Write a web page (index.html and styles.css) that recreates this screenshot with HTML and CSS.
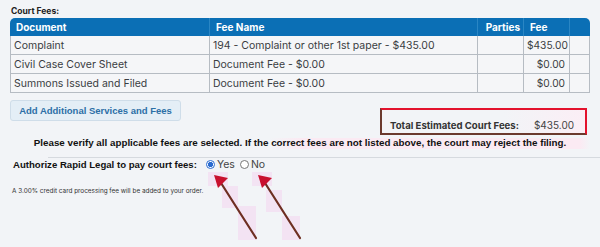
FILE: index.html
```html
<!DOCTYPE html>
<html>
<head>
<meta charset="utf-8">
<link rel="stylesheet" href="styles.css">
</head>
<body>
<div class="page">
  <div class="section-title">Court Fees:</div>
  <table class="fees">
    <colgroup>
      <col class="c-doc"><col class="c-name"><col class="c-parties"><col class="c-fee"><col class="c-extra">
    </colgroup>
    <thead>
      <tr><th>Document</th><th>Fee Name</th><th class="right">Parties</th><th>Fee</th><th></th></tr>
    </thead>
    <tbody>
      <tr><td>Complaint</td><td>194 - Complaint or other 1st paper - $435.00</td><td></td><td class="right">$435.00</td><td></td></tr>
      <tr><td>Civil Case Cover Sheet</td><td>Document Fee - $0.00</td><td></td><td class="right">$0.00</td><td></td></tr>
      <tr><td>Summons Issued and Filed</td><td>Document Fee - $0.00</td><td></td><td class="right">$0.00</td><td></td></tr>
    </tbody>
  </table>
  <div class="actions">
    <button class="add-btn">Add Additional Services and Fees</button>
    <div class="total-box">
      <span class="total-label">Total Estimated Court Fees:</span>
      <span class="total-value">$435.00</span>
    </div>
  </div>
  <div class="verify">Please verify all applicable fees are selected. If the correct fees are not listed above, the court may reject the filing.</div>
  <div class="authorize">
    <span class="auth-label">Authorize Rapid Legal to pay court fees:</span>
    <label class="radio"><span class="dot checked"></span>Yes</label>
    <label class="radio"><span class="dot"></span>No</label>
  </div>
  <div class="note">A 3.00% credit card processing fee will be added to your order.</div>
  <svg class="arrows" width="600" height="247" viewBox="0 0 600 247">
    <g fill="#ff3fd0" opacity="0.09">
      <rect x="208" y="172" width="20" height="14"/>
      <rect x="222" y="186" width="16" height="22"/>
      <rect x="238" y="206" width="18" height="34"/>
      <rect x="252" y="172" width="20" height="14"/>
      <rect x="266" y="190" width="16" height="22"/>
      <rect x="282" y="216" width="18" height="24"/>
    </g>
    <g stroke="#6e2f22" stroke-width="2.2" stroke-linecap="round">
      <line x1="256" y1="238" x2="221" y2="183"/>
      <line x1="300" y1="238" x2="265" y2="183"/>
    </g>
    <g fill="#c8102e">
      <polygon points="214,175 228,178 218,188"/>
      <polygon points="258,175 272,178 262,188"/>
    </g>
  </svg>
</div>
</body>
</html>
```

FILE: styles.css
```css
html, body {
  margin: 0;
  padding: 0;
}
body {
  background: #f2f4f7;
  width: 600px;
  height: 247px;
  overflow: hidden;
  font-family: Inter, "Liberation Sans", sans-serif;
  color: #333;
}
.page {
  position: relative;
  width: 600px;
  height: 247px;
  padding-top: 5px;
  box-sizing: border-box;
}
.section-title {
  font-size: 8.5px;
  font-weight: 700;
  color: #222;
  margin-left: 11px;
  height: 13px;
  line-height: 13px;
}
.fees {
  margin-left: 10px;
  width: 580px;
  border-collapse: separate;
  border-spacing: 0;
  table-layout: fixed;
  font-size: 10.5px;
  color: #3a3d42;
}
.c-doc { width: 200px; }
.c-name { width: 268px; }
.c-parties { width: 46px; }
.c-fee { width: 46px; }
.c-extra { width: 20px; }
.fees th {
  background: #0b6fb5;
  color: #fff;
  font-weight: 700;
  font-size: 10px;
  text-align: left;
  height: 18px;
  padding: 0 6px;
  border-right: 1px solid #2a86c4;
}
.fees th:first-child { border-top-left-radius: 5px; }
.fees th:last-child { border-top-right-radius: 5px; border-right: none; }
.fees th.right { text-align: right; padding-right: 3px; }
.fees td {
  height: 18px;
  padding: 0 3px;
  background: #f5f6f8;
  border-right: 1px solid #b6bcc3;
  border-bottom: 1px solid #b6bcc3;
  white-space: nowrap;
  overflow: hidden;
}
.fees td:first-child { border-left: 1px solid #b6bcc3; }
.fees td.right { text-align: right; padding-right: 4px; font-size: 10.2px; }
.actions {
  display: flex;
  justify-content: space-between;
  align-items: flex-start;
  margin-top: 7px;
  padding-left: 10px;
  padding-right: 13px;
}
.add-btn {
  font-family: "Liberation Sans", Arial, sans-serif;
  font-weight: 700;
  font-size: 9.5px;
  color: #2c6fa6;
  background: #e4eef6;
  border: 1px solid #cfdde9;
  border-radius: 3px;
  height: 21px;
  width: 171px;
  padding: 0;
  margin: 0;
}
.total-box {
  margin-top: 8px;
  width: 207px;
  height: 27px;
  border-top: 2px solid #e3122d;
  border-right: 2px solid #e3122d;
  border-left: 2px solid #6b3a2e;
  border-bottom: 2px solid #6b3a2e;
  display: flex;
  align-items: flex-end;
  justify-content: flex-end;
  gap: 15px;
  padding-right: 11px;
  padding-bottom: 2px;
  box-sizing: border-box;
  font-size: 9.6px;
  color: #333;
  white-space: nowrap;
  background: linear-gradient(to right, transparent 60%, #fbeef5 100%);
}
.total-label { font-weight: 700; }
.total-value { color: #444; font-size: 10px; }
.verify {
  font-family: "Liberation Sans", Arial, sans-serif;
  font-weight: 700;
  font-size: 9.8px;
  color: #111;
  text-align: center;
  margin-top: 1px;
  height: 21px;
  line-height: 14px;
  background: linear-gradient(to right, transparent 270px, #fbeaf3 300px, #fbeaf3 580px, transparent 590px);
  background-size: 100% 11px;
  background-repeat: no-repeat;
  background-position: 0 2px;
}
.authorize {
  margin-left: 48px;
  border-top: 1px solid #d6dadf;
  display: flex;
  align-items: center;
  height: 12px;
  font-family: "Liberation Sans", Arial, sans-serif;
  font-size: 9.6px;
  color: #111;
}
.auth-label {
  font-weight: 700;
  margin-left: -35px;
  margin-right: 9px;
}
.radio {
  display: flex;
  align-items: center;
  gap: 2px;
  margin-right: 5px;
  color: #444;
  font-size: 10.5px;
  font-family: Inter, "Liberation Sans", sans-serif;
}
.dot {
  width: 9px;
  height: 9px;
  border-radius: 50%;
  border: 1px solid #777;
  background: #fff;
  box-sizing: border-box;
}
.dot.checked {
  border: 1px solid #2a6bd0;
  background: radial-gradient(circle, #2a6bd0 0 2.4px, #fff 2.9px);
}
.note {
  margin-left: 12px;
  margin-top: 17px;
  font-size: 6.4px;
  color: #333;
}
.arrows {
  position: absolute;
  left: 0;
  top: 0;
  pointer-events: none;
}
```
